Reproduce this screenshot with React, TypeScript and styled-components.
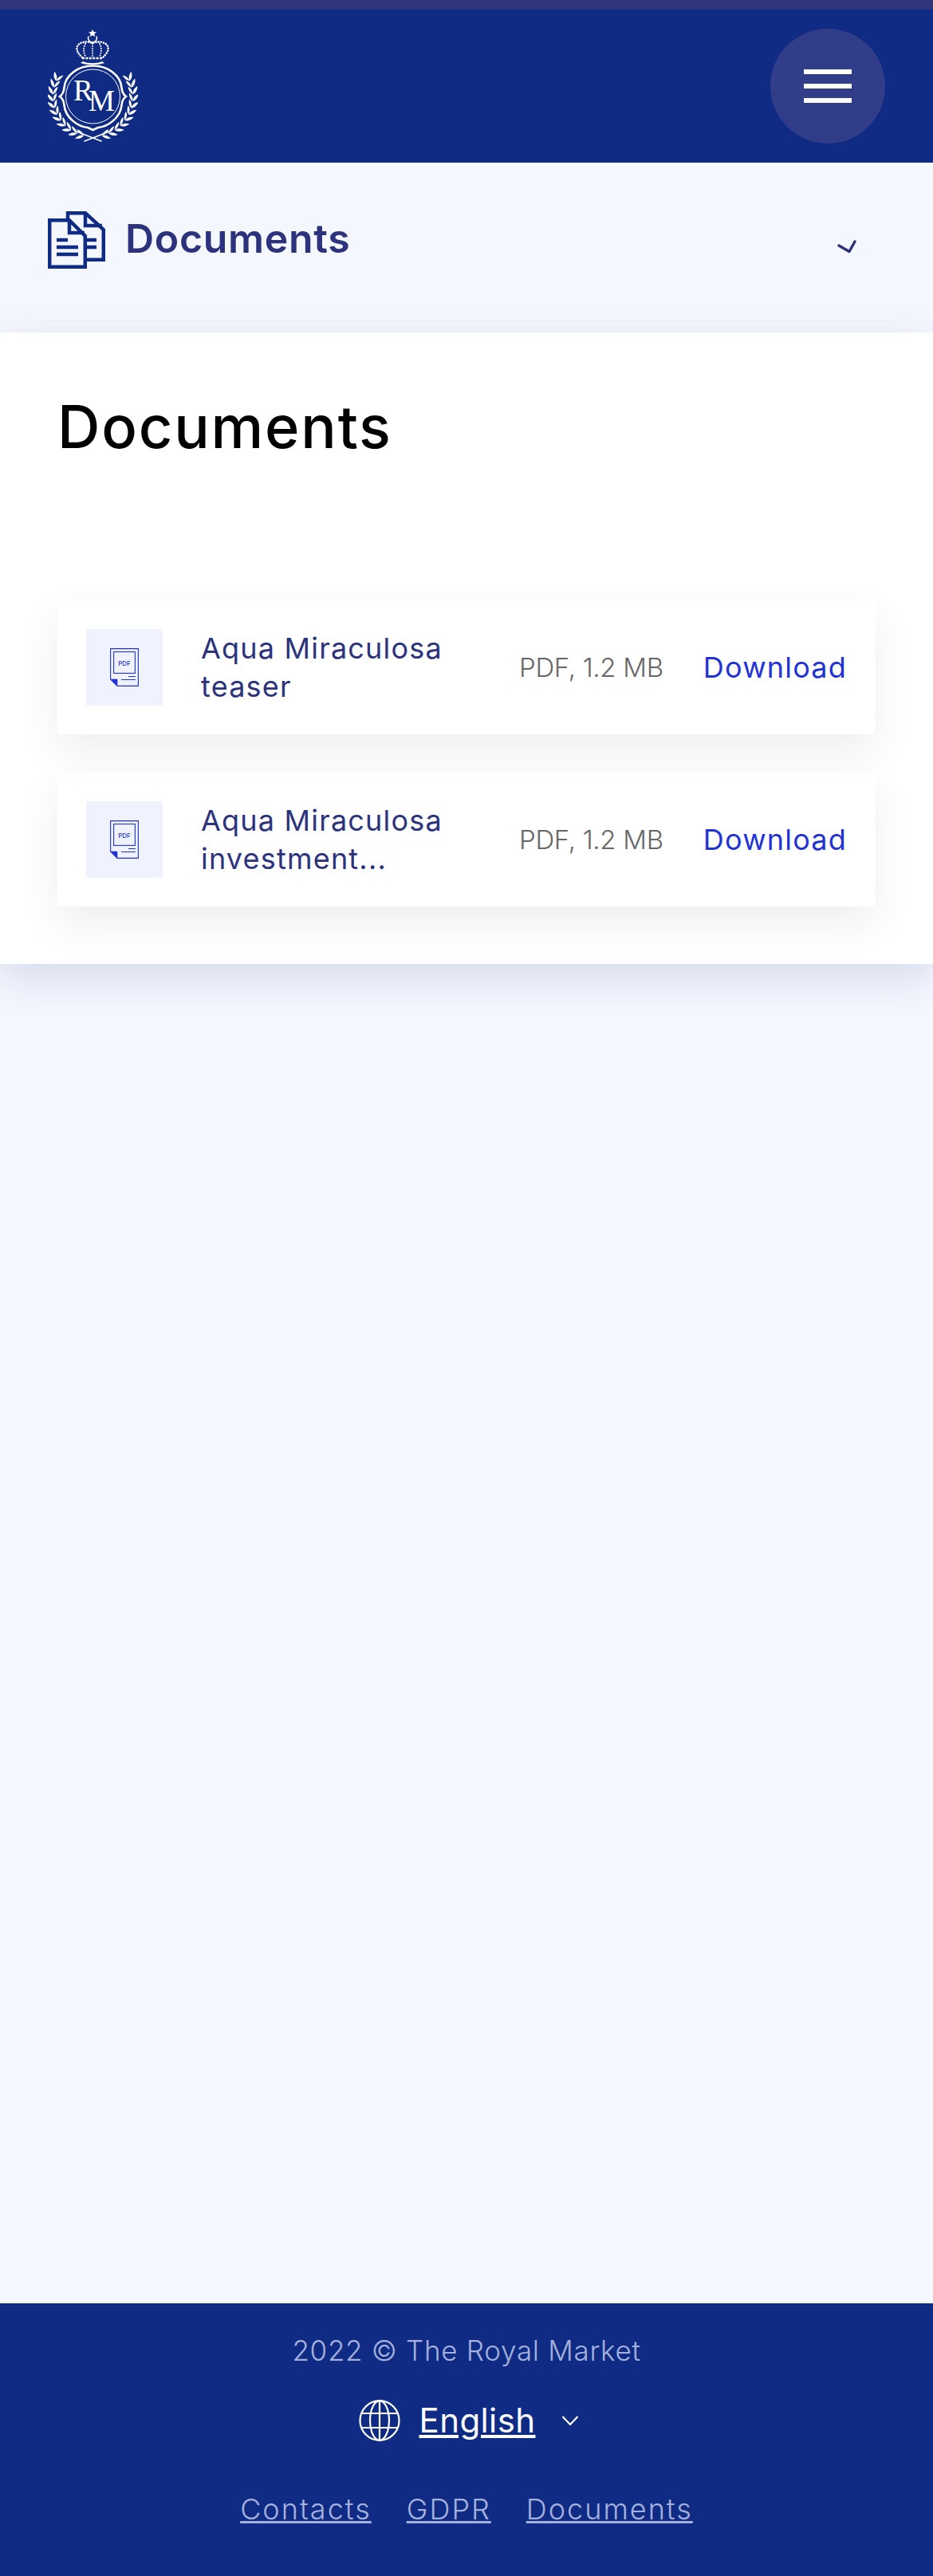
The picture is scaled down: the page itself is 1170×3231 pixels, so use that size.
import { FC } from "react";
import styled, { createGlobalStyle } from "styled-components";

const GlobalStyle = createGlobalStyle`
  html, body {
    margin: 0;
    padding: 0;
    background: #f4f7fe;
    font-family: "Inter", "Open Sans", sans-serif;
  }
  * {
    box-sizing: border-box;
  }
`;

const documents = [
  { id: 1, first: "Aqua Miraculosa", second: "teaser" },
  { id: 2, first: "Aqua Miraculosa", second: "investment..." },
];

const leafAngles = [203, 193, 183, 173, 163, 153, 143, 133, 123, 113, 103];

const Laurel: FC = () => (
  <>
    {leafAngles.map((angle) => (
      <g key={angle} transform={`rotate(${angle} 56.5 85)`}>
        <path d="M50 0 C53 1 56 4 56.5 10 C53 8 50 5 50 0 Z" transform="translate(56.5 85)" />
        <path d="M50 0 C47 2 45 5 44.5 10 C48 8 50 5 50 0 Z" transform="translate(56.5 85)" />
      </g>
    ))}
  </>
);

const Logo: FC = () => (
  <svg width="113" height="142" viewBox="0 0 113 142" fill="none">
    <path d="M56 1 L57.5 4 L61 4.4 L58.4 6.6 L59.2 10 L56 8.2 L52.8 10 L53.6 6.6 L51 4.4 L54.5 4 Z" fill="#fff" />
    <path d="M51 9.5 A5.5 5.5 0 1 0 61 9.5" stroke="#fff" strokeWidth="1.6" />
    <path
      d="M43 36 C38 31 35 27 37 22 C39 17 48 15 56 18 C64 15 73 17 75 22 C77 27 74 31 69 36"
      stroke="#fff"
      strokeWidth="2.6"
      strokeLinecap="round"
      strokeDasharray="0.1 3.1"
    />
    <path d="M56 19 L56 35 M47 19 C44 24 45 30 47 35 M65 19 C68 24 67 30 65 35" stroke="#fff" strokeWidth="2" strokeLinecap="round" strokeDasharray="0.1 2.9" />
    <path d="M43 37 L69 37" stroke="#fff" strokeWidth="2.4" strokeDasharray="3 1.4" />
    <path d="M44 41 C50 44 62 44 68 41 L71 43 C62 46 50 46 41 43 Z" fill="#fff" />
    <path
      d="M56.5 46.5 C38 46.5 22 58 20.5 74 C20 79 18 83 15 85 C18 87 20 91 20.5 96 C22 112 38 123 50 124 L56.5 127 L63 124 C75 123 91 112 92.5 96 C93 91 95 87 98 85 C95 83 93 79 92.5 74 C91 58 75 46.5 56.5 46.5 Z"
      stroke="#fff"
      strokeWidth="2.6"
    />
    <circle cx="56.5" cy="85" r="34" stroke="#fff" strokeWidth="1" />
    <LogoLetter x="32" y="90">R</LogoLetter>
    <LogoLetter x="51" y="103">M</LogoLetter>
    <g fill="#fff">
      <Laurel />
      <g transform="matrix(-1 0 0 1 113 0)">
        <Laurel />
      </g>
    </g>
    <path d="M46 141 L77 129 M67 141 L36 129" stroke="#fff" strokeWidth="1.6" strokeLinecap="round" />
  </svg>
);

const DocumentsIcon: FC = () => (
  <svg width="72" height="72" viewBox="0 0 72 72" fill="none" stroke="#0f2b84" strokeWidth="4.5">
    <path d="M25 9 L25 2.2 L47 2.2 L69.8 23 L69.8 60.8 L49 60.8" />
    <path d="M47 3 L47 18 L68 18" />
    <path d="M2.2 11.2 L27 11.2 L46.8 31 L46.8 69.8 L2.2 69.8 Z" />
    <path d="M27 11 L27 27 L46 27" />
    <path d="M11 36 H25 M11 45 H38 M11 54 H38 M49 36 H61 M49 45 H61" />
  </svg>
);

const PdfIcon: FC = () => (
  <svg width="36" height="48" viewBox="0 0 36 48" fill="none" stroke="#2233d4">
    <path d="M0.6 0.6 H35.4 V47.4 H9 L0.6 39 Z" strokeWidth="1.1" />
    <rect x="4.6" y="4.6" width="26.8" height="26.8" strokeWidth="1.1" />
    <PdfLabel x="18" y="21.5">PDF</PdfLabel>
    <path d="M1 39 H9 V47 Z" fill="#2233d4" strokeWidth="0.6" />
    <path d="M23 35.5 H32 M14 39.5 H32" strokeWidth="1.1" />
  </svg>
);

const GlobeIcon: FC = () => (
  <svg width="52" height="52" viewBox="0 0 52 52" fill="none" stroke="#fff" strokeWidth="2.2">
    <ellipse cx="26" cy="26" rx="24.5" ry="24.8" />
    <ellipse cx="26" cy="26" rx="12" ry="24.8" />
    <path d="M26 1 V51 M4 17 H48 M4 35 H48" />
  </svg>
);

const App: FC = () => {
  return (
    <StyledPage>
      <GlobalStyle />
      <StyledTopStrip />
      <StyledHeader>
        <Logo />
        <StyledMenuButton aria-label="Menu">
          <span />
          <span />
          <span />
        </StyledMenuButton>
      </StyledHeader>
      <StyledSubHeader>
        <StyledSubTitle>
          <DocumentsIcon />
          <h2>Documents</h2>
        </StyledSubTitle>
        <StyledChevron width="24" height="18" viewBox="0 0 24 18" fill="none">
          <path d="M2 7 L15 14.5 L22 2" stroke="#2c337c" strokeWidth="3.4" strokeLinecap="round" strokeLinejoin="round" />
        </StyledChevron>
      </StyledSubHeader>
      <StyledPanel>
        <StyledTitle>Documents</StyledTitle>
        <StyledList>
          {documents.map((item) => (
            <StyledCard key={item.id}>
              <StyledIconBox>
                <PdfIcon />
              </StyledIconBox>
              <StyledName>
                {item.first}
                <br />
                {item.second}
              </StyledName>
              <StyledMeta>PDF, 1.2 MB</StyledMeta>
              <StyledDownload href="#">Download</StyledDownload>
            </StyledCard>
          ))}
        </StyledList>
      </StyledPanel>
      <StyledSpacer />
      <StyledFooter>
        <StyledCopyright>2022 © The Royal Market</StyledCopyright>
        <StyledLanguage>
          <GlobeIcon />
          <a href="#">English</a>
          <svg width="22" height="14" viewBox="0 0 22 14" fill="none">
            <path d="M1.5 2 L11 12 L20.5 2" stroke="#fff" strokeWidth="2.2" />
          </svg>
        </StyledLanguage>
        <StyledFooterLinks>
          <a href="#">Contacts</a>
          <a href="#">GDPR</a>
          <a href="#">Documents</a>
        </StyledFooterLinks>
      </StyledFooter>
    </StyledPage>
  );
};

export default App;

const StyledPage = styled.div`
  display: flex;
  flex-direction: column;
  min-height: 3231px;
  background: #f4f7fe;
`;

const StyledTopStrip = styled.div`
  height: 12px;
  background: #2e3579;
`;

const StyledHeader = styled.header`
  height: 192px;
  padding: 24px 60px 0;
  display: flex;
  justify-content: space-between;
  align-items: flex-start;
  background: #0f2b84;
`;

const StyledMenuButton = styled.button`
  width: 144px;
  height: 144px;
  padding: 0;
  border: none;
  border-radius: 50%;
  background: #323d89;
  display: flex;
  flex-direction: column;
  align-items: center;
  justify-content: center;
  gap: 12px;

  span {
    display: block;
    width: 60px;
    height: 6px;
    background: #fff;
  }
`;

const LogoLetter = styled.text`
  font-family: "Liberation Serif", serif;
  font-size: 37px;
  fill: #fff;
`;

const PdfLabel = styled.text`
  font-family: "Inter", sans-serif;
  font-size: 8px;
  font-weight: 500;
  text-anchor: middle;
  fill: #2233d4;
  stroke: none;
`;

const StyledSubHeader = styled.div`
  height: 213px;
  padding: 60px 96px 0 60px;
  display: flex;
  justify-content: space-between;
  align-items: flex-start;
`;

const StyledSubTitle = styled.div`
  display: flex;
  align-items: center;
  gap: 25px;

  h2 {
    margin: 0 0 4px;
    font-size: 50px;
    line-height: 70px;
    font-weight: 600;
    color: #2c337c;
    letter-spacing: 0.7px;
  }
`;

const StyledChevron = styled.svg`
  margin-top: 37px;
`;

const StyledPanel = styled.main`
  height: 792px;
  padding: 72px 72px 0;
  background: #fff;
  box-shadow: 0 16px 48px rgba(44, 51, 124, 0.15);
  position: relative;
`;

const StyledTitle = styled.h1`
  margin: 0;
  font-size: 74px;
  line-height: 92px;
  font-weight: 500;
  color: #000;
  letter-spacing: 1.8px;
`;

const StyledList = styled.div`
  margin-top: 172px;
  display: flex;
  flex-direction: column;
  gap: 48px;
`;

const StyledCard = styled.div`
  height: 168px;
  padding: 0 36px;
  display: flex;
  align-items: center;
  background: #fff;
  box-shadow: 0 20px 50px rgba(0, 0, 0, 0.07);
`;

const StyledIconBox = styled.div`
  width: 96px;
  height: 96px;
  margin-right: 48px;
  flex-shrink: 0;
  display: flex;
  align-items: center;
  justify-content: center;
  background: #f0f3fe;
`;

const StyledName = styled.div`
  flex: 1;
  font-size: 36px;
  line-height: 48px;
  font-weight: 400;
  color: #2c337c;
  letter-spacing: 1.2px;
`;

const StyledMeta = styled.div`
  margin-right: 50px;
  font-size: 33px;
  font-weight: 300;
  color: #666;
  letter-spacing: -0.3px;
`;

const StyledDownload = styled.a`
  font-size: 36px;
  font-weight: 400;
  color: #2233d4;
  text-decoration: none;
  letter-spacing: 1.2px;
`;

const StyledSpacer = styled.div`
  flex: 1;
`;

const StyledFooter = styled.footer`
  height: 342px;
  padding-top: 34px;
  display: flex;
  flex-direction: column;
  align-items: center;
  background: #0f2b84;
`;

const StyledCopyright = styled.div`
  font-size: 35px;
  line-height: 50px;
  font-weight: 300;
  color: #a5b1dd;
  letter-spacing: 0.7px;
`;

const StyledLanguage = styled.div`
  margin-top: 37px;
  margin-left: 6px;
  height: 52px;
  display: flex;
  align-items: center;

  a {
    margin: 0 33px 0 24px;
    font-size: 42px;
    line-height: 52px;
    color: #fff;
    letter-spacing: 0.4px;
  }
`;

const StyledFooterLinks = styled.nav`
  margin-top: 60px;
  display: flex;
  gap: 44px;

  a {
    font-size: 36px;
    line-height: 50px;
    font-weight: 300;
    color: #a5b1dd;
    letter-spacing: 2px;
  }
`;
